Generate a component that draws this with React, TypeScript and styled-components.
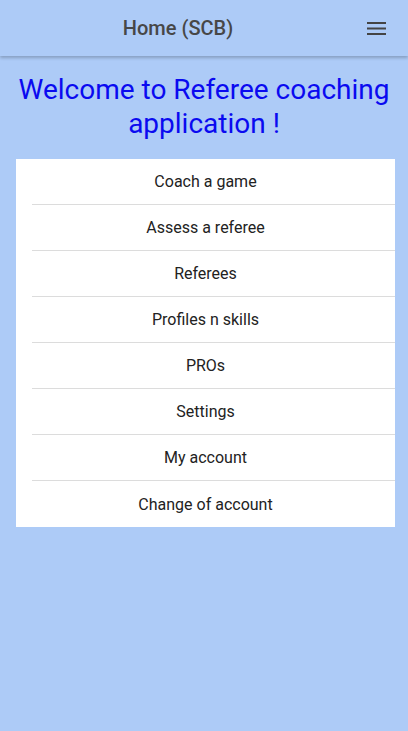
import styled, { createGlobalStyle } from 'styled-components'

const GlobalStyle = createGlobalStyle`
  html, body {
    margin: 0;
    padding: 0;
    background: #adcbf7;
    font-family: Roboto, "Liberation Sans", sans-serif;
  }
`

const Page = styled.div`
  min-height: 731px;
  background: #adcbf7;
`

const Header = styled.header`
  height: 56px;
  display: flex;
  align-items: center;
  background: #adcbf7;
  box-shadow: 0 2px 3px rgba(0, 0, 0, 0.22);
`

const Title = styled.h1`
  flex: 1;
  margin: 0;
  font-size: 20px;
  font-weight: 500;
  text-align: center;
  color: #474747;
`

const MenuButton = styled.button`
  width: 52px;
  height: 56px;
  padding: 0 22px 0 0;
  border: none;
  background: transparent;
  display: flex;
  align-items: center;
  justify-content: flex-end;
`

const Welcome = styled.h2`
  margin: 17px 16px 0;
  font-size: 28px;
  line-height: 34px;
  font-weight: 400;
  text-align: center;
  color: #0a0af0;
`

const List = styled.ul`
  list-style: none;
  margin: 18px 13px 0 16px;
  padding: 0;
  background: #fff;
`

const Item = styled.li<{ $last?: boolean }>`
  margin-left: 16px;
  height: 46px;
  display: flex;
  align-items: center;
  justify-content: center;
  padding-right: 16px;
  font-size: 16px;
  color: #222;
  border-bottom: ${({ $last }) => ($last ? 'none' : '1px solid #dcdcdc')};
  box-sizing: border-box;
`

const items = [
  'Coach a game',
  'Assess a referee',
  'Referees',
  'Profiles n skills',
  'PROs',
  'Settings',
  'My account',
  'Change of account',
]

export default function App() {
  return (
    <Page>
      <GlobalStyle />
      <Header>
        <Title>Home (SCB)</Title>
        <MenuButton aria-label="menu">
          <svg width="19" height="13" viewBox="0 0 19 13">
            <path d="M0 1h19M0 6.5h19M0 12h19" stroke="#444" strokeWidth="2" />
          </svg>
        </MenuButton>
      </Header>
      <Welcome>Welcome to Referee coaching application !</Welcome>
      <List>
        {items.map((label, i) => (
          <Item key={label} $last={i === items.length - 1}>
            {label}
          </Item>
        ))}
      </List>
    </Page>
  )
}
